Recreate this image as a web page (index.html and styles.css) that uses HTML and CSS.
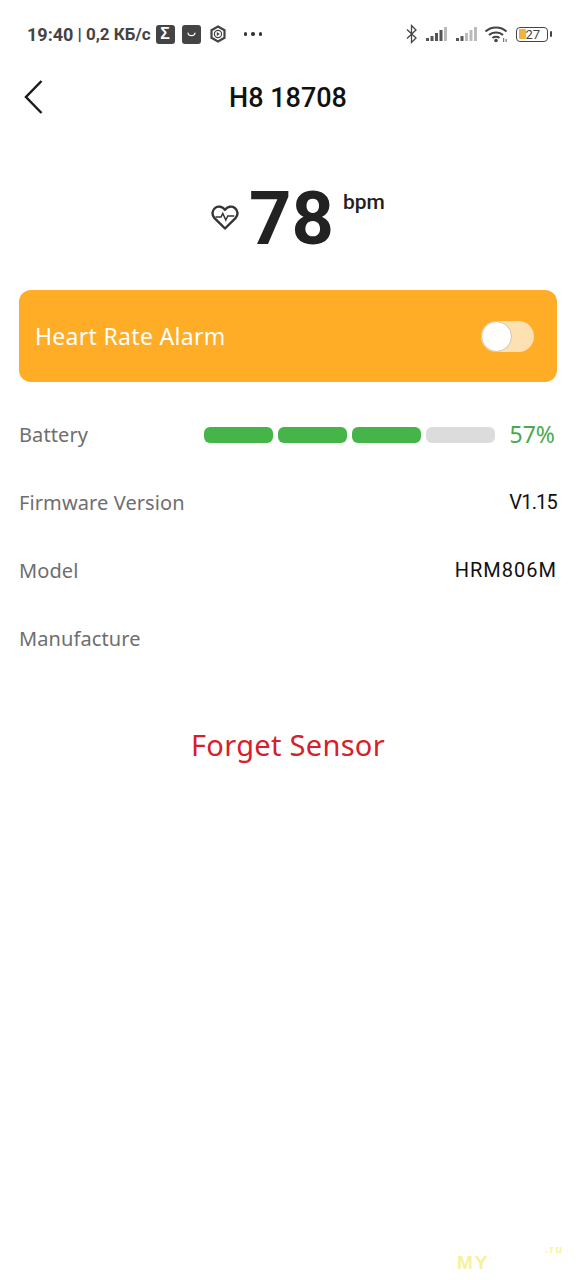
FILE: index.html
```html
<!DOCTYPE html>
<html lang="en">
<head>
  <meta charset="UTF-8">
  <title>H8 18708</title>
  <meta name="viewport" content="width=device-width, initial-scale=1.0">
  <link rel="stylesheet" href="styles.css">
</head>
<body>
  <div class="phone">
    <div class="status-bar">
      <div class="status-left">
        <span class="status-time">19:40</span>
        <span class="status-speed">| 0,2 КБ/с</span>
        <span class="app-badge app-sigma">Σ</span>
        <span class="app-badge">
          <svg width="19" height="19" viewBox="0 0 19 19"><path d="M6 8c.6 3.6 6.400 3.600 7 0" fill="none" stroke="#fff" stroke-width="1.200" stroke-linecap="round"/></svg>
        </span>
        <svg class="app-hex" width="18" height="18" viewBox="0 0 18 18">
          <path d="M9 1.500l6.500 3.750v7.500L9 16.500l-6.500-3.750v-7.500z" fill="none" stroke="#444" stroke-width="2.200"/>
          <circle cx="9" cy="9" r="3.600" fill="none" stroke="#444" stroke-width="1.200"/>
          <path d="M7.800 7l3 2-3 2z" fill="#444"/>
        </svg>
        <span class="status-more">
          <i></i><i></i><i></i>
        </span>
      </div>
      <div class="status-right">
        <svg width="14" height="20" viewBox="0 0 14 20"><path d="M2 5.500l9 8.500-4.500 4.500V1.500L11 6l-9 8.500" fill="none" stroke="#444" stroke-width="1.300"/></svg>
        <svg class="signal" width="23" height="16" viewBox="0 0 23 16">
          <rect x="0" y="12" width="3" height="3" fill="#555"/>
          <rect x="4.500" y="10" width="3" height="5" fill="#555"/>
          <rect x="9" y="7" width="3" height="8" fill="#555"/>
          <rect x="13.500" y="4" width="3" height="11" fill="#555"/>
          <rect x="18" y="1" width="3" height="14" fill="#bbb"/>
        </svg>
        <svg class="signal" width="23" height="16" viewBox="0 0 23 16">
          <rect x="0" y="12" width="3" height="3" fill="#555"/>
          <rect x="4.500" y="10" width="3" height="5" fill="#555"/>
          <rect x="9" y="7" width="3" height="8" fill="#bbb"/>
          <rect x="13.500" y="4" width="3" height="11" fill="#bbb"/>
          <rect x="18" y="1" width="3" height="14" fill="#bbb"/>
        </svg>
        <svg class="wifi" width="24" height="18" viewBox="0 0 24 18">
          <path d="M1.500 6.500c5.500-5.500 15.500-5.500 21 0M5 10c3.500-3.500 10.500-3.500 14 0M8.500 13c1.800-1.600 5.200-1.600 7 0" fill="none" stroke="#444" stroke-width="2"/>
          <circle cx="12" cy="15.500" r="1.800" fill="#444"/>
          <rect x="19" y="13" width="1.200" height="4" fill="#777"/>
          <rect x="21.500" y="14" width="1.200" height="3" fill="#777"/>
        </svg>
        <div class="battery-icon">
          <div class="battery-body"><span class="battery-fill"></span><span class="battery-num">27</span></div>
          <span class="battery-tip"></span>
        </div>
      </div>
    </div>

    <div class="header">
      <svg class="back" width="20" height="36" viewBox="0 0 20 36"><path d="M17.500 2L2 18l15.500 16" fill="none" stroke="#1a1a1a" stroke-width="2.500"/></svg>
      <h1>H8 18708</h1>
    </div>

    <div class="rate">
      <svg class="rate-heart" width="28" height="26" viewBox="0 0 28 26">
        <path d="M14 24.500L3.500 14.200C.5 11 1 6.200 4.200 3.900 7.300 1.700 11.500 2.500 14 5.800 16.500 2.500 20.700 1.700 23.800 3.900 27 6.200 27.500 11 24.500 14.200z" fill="none" stroke="#333" stroke-width="2.400" stroke-linejoin="round"/>
        <path d="M4.500 13h5.500l1.800-3.500 3 6.500 2-4h6.500" fill="none" stroke="#333" stroke-width="1.500"/>
      </svg>
      <span class="rate-value">78</span>
      <span class="rate-unit">bpm</span>
    </div>

    <div class="alarm-card">
      <span>Heart Rate Alarm</span>
      <div class="toggle"><span class="toggle-knob"></span></div>
    </div>

    <div class="info-row">
      <span class="info-label">Battery</span>
      <div class="battery-level">
        <div class="battery-bars">
          <span class="bar on"></span>
          <span class="bar on"></span>
          <span class="bar on"></span>
          <span class="bar"></span>
        </div>
        <span class="battery-pct">57%</span>
      </div>
    </div>
    <div class="info-row">
      <span class="info-label">Firmware Version</span>
      <span class="info-value tight">V1.15</span>
    </div>
    <div class="info-row">
      <span class="info-label">Model</span>
      <span class="info-value">HRM806M</span>
    </div>
    <div class="info-row">
      <span class="info-label">Manufacture</span>
    </div>

    <div class="forget">Forget Sensor</div>

    <div class="watermark">MY<span class="watermark-small">.ru</span></div>
  </div>
</body>
</html>
```

FILE: styles.css
```css
* {
  box-sizing: border-box;
}

body {
  margin: 0;
  font-family: "Noto Sans", "Liberation Sans", sans-serif;
  background: #fff;
  color: #111;
}

.phone {
  position: relative;
  width: 576px;
  height: 1280px;
  overflow: hidden;
}

.status-bar {
  display: flex;
  justify-content: space-between;
  align-items: center;
  height: 30px;
  margin-top: 19px;
  padding: 0 24px 0 27px;
  color: #444;
}

.status-left {
  display: flex;
  align-items: center;
}

.status-time {
  font-family: Roboto, sans-serif;
  font-size: 18px;
  font-weight: 700;
}

.status-speed {
  font-family: Roboto, sans-serif;
  font-size: 17px;
  font-weight: 700;
  margin-left: 4px;
}

.app-badge {
  display: flex;
  align-items: center;
  justify-content: center;
  width: 19px;
  height: 19px;
  margin-left: 5px;
  background: #444;
  border-radius: 3px;
  color: #fff;
  font-family: "Liberation Sans", sans-serif;
  font-size: 16px;
  font-weight: 700;
}

.app-badge + .app-badge {
  margin-left: 7px;
}

.app-hex {
  margin-left: 8px;
}

.status-more {
  display: flex;
  gap: 4px;
  margin-left: 17px;
}

.status-more i {
  width: 3.500px;
  height: 3.500px;
  border-radius: 50%;
  background: #333;
}

.status-right {
  display: flex;
  align-items: center;
  gap: 7px;
}

.wifi {
  margin-left: -2px;
}

.battery-icon {
  display: flex;
  align-items: center;
  margin-left: 1px;
}

.battery-body {
  display: flex;
  align-items: center;
  position: relative;
  width: 32px;
  height: 15px;
  border: 1.500px solid #444;
  border-radius: 4px;
  font-family: Roboto, sans-serif;
  font-size: 13px;
  color: #444;
}

.battery-fill {
  width: 7px;
  height: 10px;
  margin-left: 1.500px;
  background: #f2b33d;
  border-radius: 1px;
}

.battery-tip {
  width: 2px;
  height: 6px;
  margin-left: 2px;
  background: #444;
  border-radius: 1px;
}

.header {
  position: relative;
  display: flex;
  justify-content: center;
  align-items: center;
  height: 60px;
  margin-top: 18px;
}

.header h1 {
  margin: 2px 0 0;
  font-family: Roboto, sans-serif;
  font-size: 27px;
  font-weight: 500;
  color: #111;
}

.back {
  position: absolute;
  left: 24px;
  top: 12px;
}

.rate {
  display: flex;
  justify-content: center;
  align-items: flex-start;
  height: 80px;
  margin-top: 52px;
  padding-left: 20px;
  color: #222;
  font-family: Roboto, sans-serif;
}

.rate-heart {
  margin-top: 25px;
  margin-right: 10px;
}

.rate-value {
  font-size: 74px;
  font-weight: 700;
  line-height: 80px;
}

.rate-unit {
  margin-top: 11px;
  margin-left: 9px;
  font-size: 21px;
  font-weight: 500;
}

.alarm-card {
  display: flex;
  justify-content: space-between;
  align-items: center;
  height: 92px;
  margin: 31px 19px 0;
  padding: 0 23px 0 16px;
  background: #ffac27;
  border-radius: 12px;
  color: #fff;
  font-size: 23px;
  letter-spacing: 0.3px;
}

.toggle {
  position: relative;
  width: 53px;
  height: 31px;
  background: #fde1b3;
  border-radius: 16px;
}

.toggle-knob {
  position: absolute;
  left: 0;
  top: 0;
  width: 31px;
  height: 31px;
  background: #fff;
  border: 1px solid #cfc4ae;
  border-radius: 50%;
}

.info-row {
  display: flex;
  justify-content: space-between;
  align-items: center;
  height: 68px;
  padding: 0 19px;
  font-size: 20px;
  letter-spacing: 0.1px;
}

.alarm-card + .info-row {
  margin-top: 18px;
}

.info-label {
  color: #6e6e6e;
}

.info-value {
  font-family: Roboto, sans-serif;
  letter-spacing: 1px;
  color: #111;
}

.info-value.tight {
  letter-spacing: -0.8px;
}

.battery-level {
  display: flex;
  align-items: center;
}

.battery-bars {
  display: flex;
  gap: 5px;
  margin-top: 2px;
}

.bar {
  width: 69px;
  height: 16px;
  background: #dcdcdc;
  border-radius: 6px;
}

.bar.on {
  background: #46b549;
}

.battery-pct {
  width: 62px;
  text-align: right;
  padding-right: 2px;
  color: #4aa84e;
  font-size: 23px;
  letter-spacing: 0;
}

.forget {
  margin-top: 53px;
  text-align: center;
  color: #d6202a;
  font-size: 29px;
  line-height: 40px;
  letter-spacing: 0.3px;
}

.watermark {
  position: absolute;
  left: 457px;
  top: 1252px;
  color: #f6f29a;
  font-family: "Liberation Sans", sans-serif;
  font-size: 19px;
  font-weight: 700;
  letter-spacing: 2px;
}

.watermark-small {
  position: absolute;
  left: 88px;
  top: -8px;
  font-size: 10px;
}
```
